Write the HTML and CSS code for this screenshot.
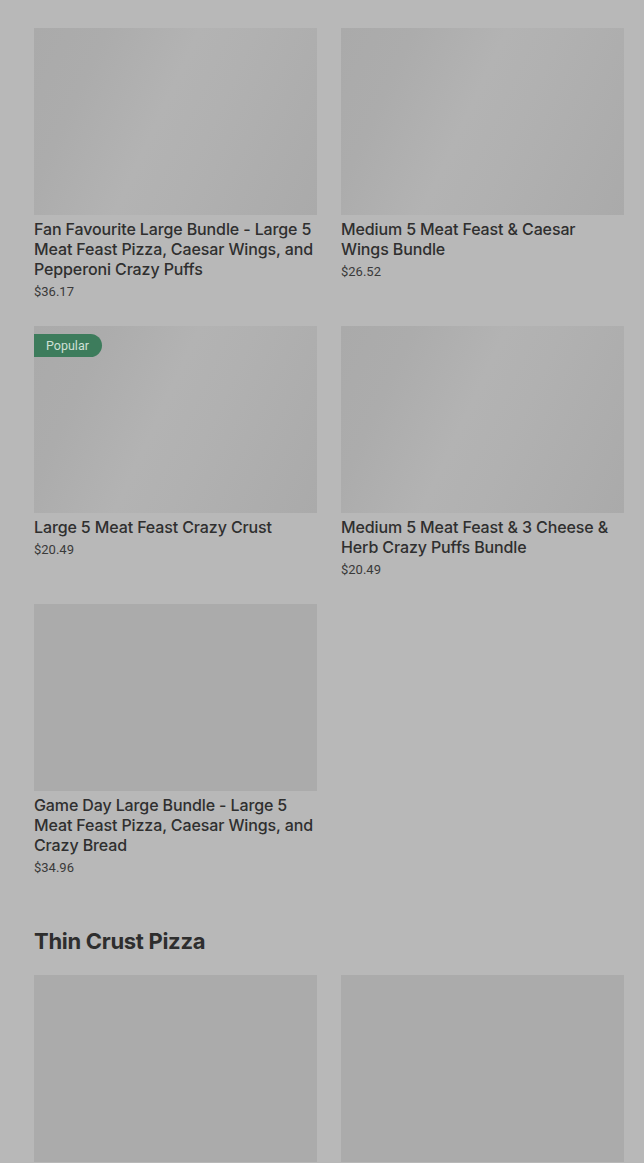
FILE: index.html
```html
<!DOCTYPE html>
<html>
<head>
<meta charset="utf-8">
<link rel="stylesheet" href="styles.css">
</head>
<body>
<div class="page">
  <section class="section cut">
    <div class="prev-row">
      <div class="price">$36.17</div>
      <div class="price">$26.52</div>
    </div>
    <div class="grid">
      <div class="card">
        <div class="thumb shimmer"></div>
        <div class="title">Fan Favourite Large Bundle - Large 5 Meat Feast Pizza, Caesar Wings, and Pepperoni Crazy Puffs</div>
        <div class="price">$36.17</div>
      </div>
      <div class="card">
        <div class="thumb shimmer"></div>
        <div class="title">Medium 5 Meat Feast &amp; Caesar Wings Bundle</div>
        <div class="price">$26.52</div>
      </div>
      <div class="card">
        <div class="thumb shimmer"><span class="badge">Popular</span></div>
        <div class="title">Large 5 Meat Feast Crazy Crust</div>
        <div class="price">$20.49</div>
      </div>
      <div class="card">
        <div class="thumb shimmer"></div>
        <div class="title">Medium 5 Meat Feast &amp; 3 Cheese &amp; Herb Crazy Puffs Bundle</div>
        <div class="price">$20.49</div>
      </div>
      <div class="card">
        <div class="thumb"></div>
        <div class="title">Game Day Large Bundle - Large 5 Meat Feast Pizza, Caesar Wings, and Crazy Bread</div>
        <div class="price">$34.96</div>
      </div>
    </div>
  </section>
  <section class="section">
    <h2 class="heading">Thin Crust Pizza</h2>
    <div class="grid">
      <div class="card"><div class="thumb"></div></div>
      <div class="card"><div class="thumb"></div></div>
    </div>
  </section>
</div>
</body>
</html>
```
FILE: styles.css
```css
* { box-sizing: border-box; }
html, body {
  margin: 0;
  padding: 0;
  background: #b8b8b8;
  overflow: hidden;
}
body {
  font-family: Inter, Roboto, "Noto Sans", Arial, sans-serif;
  color: #2e2e2e;
}
.page {
  padding: 0 20px 0 34px;
}
.prev-row {
  display: grid;
  grid-template-columns: 283px 283px;
  column-gap: 24px;
  margin-top: -14px;
  margin-bottom: 26px;
}
.prev-row .price { margin-top: 0; }
.section.cut {
  margin-bottom: 51px;
}
.grid {
  display: grid;
  grid-template-columns: 283px 283px;
  column-gap: 24px;
  row-gap: 26px;
}
.card {
  display: flex;
  flex-direction: column;
}
.thumb {
  position: relative;
  height: 187px;
  background: #ababab;
}
.thumb.shimmer {
  background: linear-gradient(115deg, #aaaaaa 0%, #acacac 20%, #b3b3b3 45%, #b1b1b1 60%, #aaaaaa 100%);
}
.badge {
  position: absolute;
  left: 0;
  top: 8px;
  height: 23px;
  padding: 0 13px 0 12px;
  background: #3d7c5c;
  color: #cfe0d6;
  font-family: Roboto, Arial, sans-serif;
  font-size: 12.5px;
  line-height: 23px;
  border-radius: 0 12px 12px 0;
}
.title {
  margin-top: 4px;
  font-size: 16px;
  line-height: 20px;
  font-weight: 500;
  letter-spacing: -0.12px;
  color: #2f2f2f;
}
.price {
  margin-top: 5px;
  font-family: Roboto, Arial, sans-serif;
  font-size: 13px;
  line-height: 16px;
  color: #3a3a3a;
}
.heading {
  margin: 0 0 20px 0;
  font-size: 22px;
  line-height: 28px;
  font-weight: 700;
  letter-spacing: -0.3px;
  color: #2e2e2e;
}
```
